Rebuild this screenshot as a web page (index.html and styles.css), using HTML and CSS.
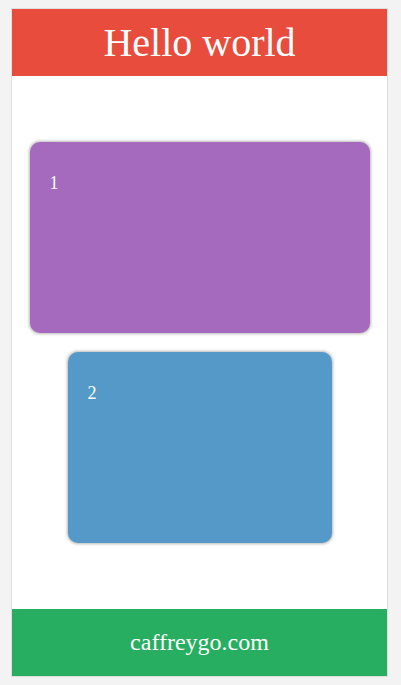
FILE: index.html
```html
<!DOCTYPE html>
<html>
<head>
<meta charset="utf-8">
<link rel="stylesheet" href="styles.css">
</head>
<body>
<div class="phone">
  <header class="header">Hello world</header>
  <main class="content">
    <div class="card card-purple"><p class="label">1</p></div>
    <div class="card card-blue"><p class="label">2</p></div>
  </main>
  <footer class="footer">caffreygo.com</footer>
</div>
</body>
</html>
```
FILE: styles.css
```css
html, body {
  margin: 0;
  padding: 0;
  background: #f3f3f3;
}
body {
  font-family: "Liberation Serif", "Times New Roman", serif;
  padding: 8px 0 0 11px;
}
.phone {
  width: 375px;
  height: 667px;
  border: 1px solid #dedede;
  background: #fff;
  display: flex;
  flex-direction: column;
}
.header {
  height: 67px;
  background: #e74c3c;
  color: #fff;
  font-size: 40px;
  display: flex;
  align-items: center;
  justify-content: center;
}
.content {
  flex: 1;
  display: flex;
  flex-direction: column;
  align-items: center;
  justify-content: center;
  gap: 19px;
}
.card {
  height: 191px;
  border-radius: 10px;
  box-shadow: 0 0 3px 1px rgba(0, 0, 0, 0.28);
  padding: 20px;
  box-sizing: border-box;
  color: #fff;
}
.card-purple {
  width: 340px;
  background: #a569bd;
}
.card-blue {
  width: 264px;
  background: #5499c7;
}
.label {
  margin: 11px 0 0 0;
  font-size: 18px;
}
.footer {
  height: 67px;
  background: #27ae60;
  color: #fff;
  font-size: 24px;
  display: flex;
  align-items: center;
  justify-content: center;
}
```
